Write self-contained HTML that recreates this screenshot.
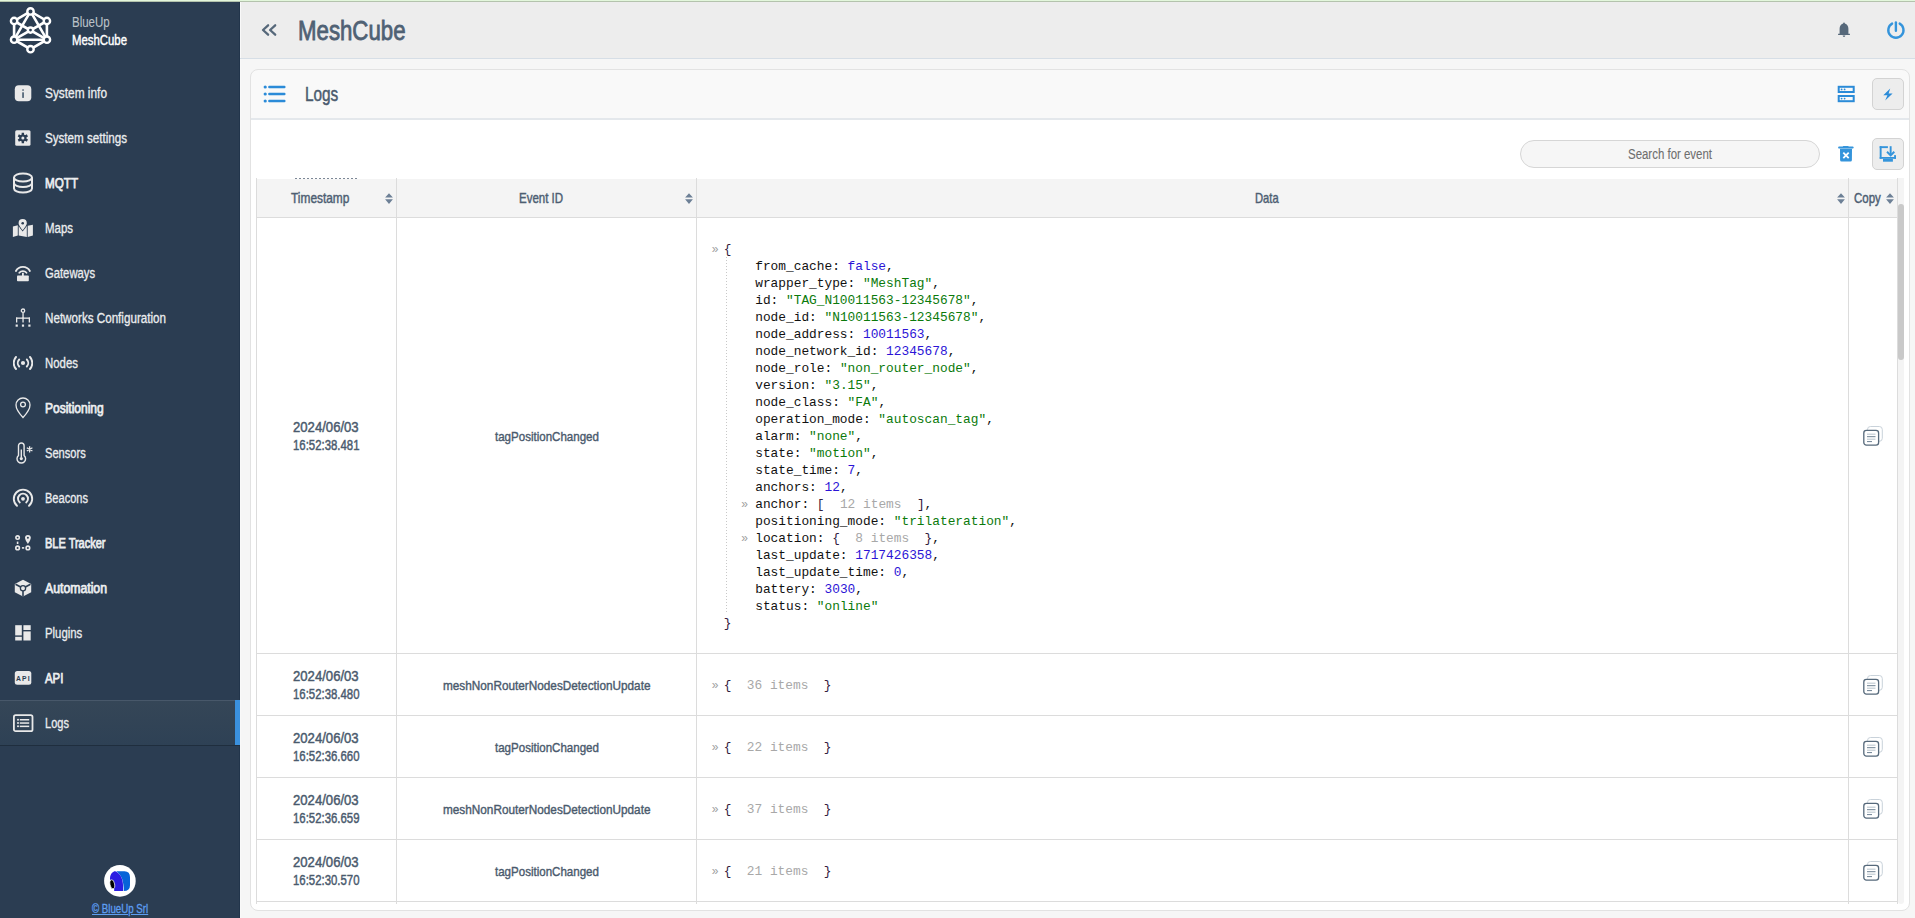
<!DOCTYPE html>
<html><head><meta charset="utf-8"><style>
html,body{margin:0;padding:0;}
body{width:1915px;height:918px;overflow:hidden;position:relative;background:#f5f5f5;font-family:"Liberation Sans",sans-serif;}
.t{position:absolute;white-space:pre;line-height:1;transform-origin:0 0;}
.mono{position:absolute;white-space:pre;font-family:"Liberation Mono",monospace;font-size:12.83px;line-height:17px;color:#111;}
.st{color:#0b7a0b;}
.nm{color:#2b14d6;}
.it{color:#a8a8a8;}
.br{color:#33203e;}
.arr{position:absolute;left:-12px;top:0.5px;font-family:"Liberation Sans",sans-serif;font-size:12px;color:#a0a0a0;}
.arr2{position:absolute;left:-14px;top:0.5px;font-family:"Liberation Sans",sans-serif;font-size:12px;color:#a0a0a0;}
</style></head><body>
<div style="position:absolute;left:0px;top:0px;width:1915px;height:1px;background:#e3f7dc"></div>
<div style="position:absolute;left:0px;top:1px;width:1915px;height:1px;background:#b4c3ad"></div>
<div style="position:absolute;left:0px;top:2px;width:240px;height:916px;background:#2b3d52"></div>
<div style="position:absolute;left:239px;top:2px;width:1px;height:916px;background:#22354b"></div>
<div style="position:absolute;left:240px;top:2px;width:1px;height:916px;background:#f9f9f9"></div>
<div style="position:absolute;left:241px;top:2px;width:1674px;height:56px;background:#ededed"></div>
<div style="position:absolute;left:240px;top:58px;width:1675px;height:1px;background:#d6dee6"></div>
<div style="position:absolute;left:241px;top:59px;width:1674px;height:859px;background:#f6f6f6"></div>
<div style="position:absolute;left:250px;top:69px;width:1660px;height:842px;box-sizing:border-box;border:1px solid #e2e2e2;border-radius:8px;background:linear-gradient(#f9f9f9 0 48px,#e4e8ec 48px 50px,#fff 50px)"></div>
<svg style="position:absolute;left:0;top:0" width="60" height="60" viewBox="0 0 60 60">
<g stroke="#fff" stroke-width="2.6" fill="none" stroke-linecap="round">
<path d="M30.5 11.4 L14.1 21 L14.1 39.7 L30.5 49.2 L46.9 39.7 L46.9 21 Z"/>
<path d="M30.5 11.4 L14.1 39.7 L46.9 39.7 Z"/>
<path d="M14.1 21 L46.9 39.7 M46.9 21 L14.1 39.7"/>
</g>
<g fill="#2b3d52" stroke="#fff" stroke-width="2.4">
<circle cx="30.5" cy="11.4" r="3.2"/><circle cx="14.1" cy="21" r="3.2"/><circle cx="46.9" cy="21" r="3.2"/>
<circle cx="14.1" cy="39.7" r="3.2"/><circle cx="46.9" cy="39.7" r="3.2"/><circle cx="30.5" cy="49.2" r="3.2"/>
<circle cx="30.5" cy="30.1" r="2.6"/>
</g></svg>
<div class="t" style="left:71.80px;top:15.25px;font-size:14px;font-weight:normal;color:#bcc2c8;transform:scaleX(0.8210);-webkit-text-stroke:0.1px #bcc2c8;">BlueUp</div>
<div class="t" style="left:71.60px;top:32.75px;font-size:14px;font-weight:normal;color:#ffffff;transform:scaleX(0.8124);-webkit-text-stroke:0.4px #ffffff;">MeshCube</div>
<div style="position:absolute;left:0px;top:700px;width:236px;height:1px;background:#48586a"></div>
<div style="position:absolute;left:0px;top:701px;width:236px;height:44px;background:linear-gradient(#354657,#2e4155)"></div>
<div style="position:absolute;left:0px;top:745px;width:240px;height:1px;background:#1f2e3e"></div>
<div style="position:absolute;left:235px;top:700px;width:5px;height:45px;background:#3a90dd"></div>
<div class="t" style="left:45.00px;top:86.15px;font-size:14px;font-weight:normal;color:#ebedef;transform:scaleX(0.8477);-webkit-text-stroke:0.3px #ebedef;">System info</div>
<div class="t" style="left:45.00px;top:131.15px;font-size:14px;font-weight:normal;color:#ebedef;transform:scaleX(0.8299);-webkit-text-stroke:0.3px #ebedef;">System settings</div>
<div class="t" style="left:45.00px;top:176.15px;font-size:14px;font-weight:normal;color:#ebedef;transform:scaleX(0.8321);-webkit-text-stroke:0.75px #ebedef;">MQTT</div>
<div class="t" style="left:45.00px;top:221.15px;font-size:14px;font-weight:normal;color:#ebedef;transform:scaleX(0.8180);-webkit-text-stroke:0.3px #ebedef;">Maps</div>
<div class="t" style="left:45.00px;top:266.15px;font-size:14px;font-weight:normal;color:#ebedef;transform:scaleX(0.8032);-webkit-text-stroke:0.3px #ebedef;">Gateways</div>
<div class="t" style="left:45.00px;top:311.15px;font-size:14px;font-weight:normal;color:#ebedef;transform:scaleX(0.8316);-webkit-text-stroke:0.3px #ebedef;">Networks Configuration</div>
<div class="t" style="left:45.00px;top:356.15px;font-size:14px;font-weight:normal;color:#ebedef;transform:scaleX(0.8154);-webkit-text-stroke:0.3px #ebedef;">Nodes</div>
<div class="t" style="left:45.00px;top:401.15px;font-size:14px;font-weight:normal;color:#ebedef;transform:scaleX(0.8571);-webkit-text-stroke:0.75px #ebedef;">Positioning</div>
<div class="t" style="left:45.00px;top:446.15px;font-size:14px;font-weight:normal;color:#ebedef;transform:scaleX(0.7924);-webkit-text-stroke:0.3px #ebedef;">Sensors</div>
<div class="t" style="left:45.00px;top:491.15px;font-size:14px;font-weight:normal;color:#ebedef;transform:scaleX(0.7893);-webkit-text-stroke:0.3px #ebedef;">Beacons</div>
<div class="t" style="left:45.00px;top:536.15px;font-size:14px;font-weight:normal;color:#ebedef;transform:scaleX(0.7854);-webkit-text-stroke:0.75px #ebedef;">BLE Tracker</div>
<div class="t" style="left:45.00px;top:581.15px;font-size:14px;font-weight:normal;color:#ebedef;transform:scaleX(0.8755);-webkit-text-stroke:0.75px #ebedef;">Automation</div>
<div class="t" style="left:45.00px;top:626.15px;font-size:14px;font-weight:normal;color:#ebedef;transform:scaleX(0.8123);-webkit-text-stroke:0.3px #ebedef;">Plugins</div>
<div class="t" style="left:45.00px;top:671.15px;font-size:14px;font-weight:normal;color:#ebedef;transform:scaleX(0.8152);-webkit-text-stroke:0.75px #ebedef;">API</div>
<div class="t" style="left:45.00px;top:716.15px;font-size:14px;font-weight:normal;color:#ebedef;transform:scaleX(0.7872);-webkit-text-stroke:0.3px #ebedef;">Logs</div>
<svg style="position:absolute;left:14px;top:85px" width="18" height="17" viewBox="0 0 18 17"><rect x="0.8" y="0.2" width="16.5" height="16" rx="4" fill="#e9e9e9"/><rect x="8.15" y="7.3" width="1.8" height="5.6" fill="#56687a"/><rect x="8.15" y="4.3" width="1.8" height="1.5" rx="0.6" fill="#56687a"/></svg>
<svg style="position:absolute;left:15px;top:130px" width="16" height="16" viewBox="0 0 16 16"><rect x="0.2" y="0.3" width="15.3" height="15.4" rx="1.5" fill="#e9e9e9"/><g fill="#2b3d52"><circle cx="7.85" cy="8" r="3.6"/><g stroke="#2b3d52" stroke-width="2.4"><path d="M7.85 2.8V13.2M3.3 5.4L12.4 10.6M3.3 10.6L12.4 5.4"/></g></g><circle cx="7.85" cy="8" r="1.5" fill="#e9e9e9"/></svg>
<svg style="position:absolute;left:12px;top:172px" width="22" height="22" viewBox="0 0 22 22"><g fill="none" stroke="#e9e9e9" stroke-width="2"><ellipse cx="11" cy="5.5" rx="9" ry="4"/><path d="M2 5.5V16.5C2 18.7 6 20.5 11 20.5S20 18.7 20 16.5V5.5"/><path d="M2 11C2 13.2 6 15 11 15S20 13.2 20 11"/></g></svg>
<svg style="position:absolute;left:8px;top:213px" width="32" height="30" viewBox="0 0 32 30"><g fill="#e9e9e9"><path d="M4.9 13.5L9.8 12.2V22.5L4.9 24.1Z"/><path d="M10.7 13.2L18.8 13.2V24.1L10.7 22.5Z"/><path d="M19.7 12.7L24.9 11.8V22.5L19.7 24.1Z"/></g><path d="M14.7 5.3A4.9 4.9 0 0 1 19.6 10.2C19.6 13 14.7 18.4 14.7 18.4S9.8 13 9.8 10.2A4.9 4.9 0 0 1 14.7 5.3Z" fill="#2b3d52"/><path d="M14.7 6.1A4.1 4.1 0 0 1 18.8 10.2C18.8 12.5 14.7 17.2 14.7 17.2S10.6 12.5 10.6 10.2A4.1 4.1 0 0 1 14.7 6.1Z" fill="#e9e9e9"/><circle cx="14.7" cy="10.2" r="1.3" fill="#2b3d52"/></svg>
<svg style="position:absolute;left:14px;top:264px" width="18" height="18" viewBox="0 0 18 18"><g fill="none" stroke="#e9e9e9" stroke-width="1.8" stroke-linecap="round"><path d="M1.9 7A8 8 0 0 1 15.9 7"/><path d="M5.3 8.8A4.6 4.6 0 0 1 12.5 8.8"/></g><rect x="8" y="8.8" width="1.8" height="3.5" fill="#e9e9e9"/><rect x="3" y="11.5" width="11.8" height="5.8" rx="0.8" fill="#e9e9e9"/></svg>
<svg style="position:absolute;left:14px;top:308px" width="18" height="20" viewBox="0 0 18 20"><g fill="none" stroke="#e9e9e9" stroke-width="1.3"><circle cx="9" cy="2.7" r="1.7"/></g><g fill="#e9e9e9"><rect x="8.4" y="4.5" width="1.3" height="6"/><rect x="2" y="9.5" width="14" height="1.3"/><rect x="2" y="9.5" width="1.3" height="5"/><rect x="8.4" y="9.5" width="1.3" height="5"/><rect x="14.7" y="9.5" width="1.3" height="5"/><rect x="1.6" y="16.5" width="2.2" height="2.2"/><rect x="7.9" y="16.5" width="2.2" height="2.2"/><rect x="14.3" y="16.5" width="2.2" height="2.2"/></g></svg>
<svg style="position:absolute;left:13px;top:356px" width="20" height="14" viewBox="0 0 20 14"><g fill="none" stroke="#e9e9e9" stroke-width="1.9" stroke-linecap="round"><path d="M3 1A9 9 0 0 0 3 13"/><path d="M17 1A9 9 0 0 1 17 13"/><path d="M6.2 3.5A5 5 0 0 0 6.2 10.5"/><path d="M13.8 3.5A5 5 0 0 1 13.8 10.5"/></g><circle cx="10" cy="7" r="2.1" fill="#e9e9e9"/></svg>
<svg style="position:absolute;left:15px;top:397px" width="16" height="22" viewBox="0 0 16 22"><g fill="none" stroke="#e9e9e9" stroke-width="1.3"><path d="M8 20.5C8 20.5 1 13 1 8A7 7 0 0 1 15 8C15 13 8 20.5 8 20.5Z"/><circle cx="8" cy="7.5" r="2.4"/></g></svg>
<svg style="position:absolute;left:15px;top:442px" width="19" height="22" viewBox="0 0 19 22"><g fill="none" stroke="#e9e9e9" stroke-width="1.4"><path d="M3.5 13.5V3.8A2.8 2.8 0 0 1 9.1 3.8V13.5A4.3 4.3 0 1 1 3.5 13.5Z"/></g><rect x="5.6" y="7.5" width="1.4" height="8" fill="#e9e9e9"/><circle cx="6.3" cy="16.6" r="1.6" fill="#e9e9e9"/><g stroke="#e9e9e9" stroke-width="1.3"><path d="M14.6 4.2V10.5M11.8 5.7L17.4 9M11.8 9L17.4 5.7"/></g></svg>
<svg style="position:absolute;left:12px;top:488px" width="22" height="20" viewBox="0 0 22 20"><g fill="none" stroke="#e9e9e9" stroke-width="1.9" stroke-linecap="round"><path d="M5 17.8A9.2 9.2 0 1 1 17 17.8"/><path d="M7.8 14.5A5 5 0 1 1 14.2 14.5"/></g><circle cx="11" cy="10.8" r="1.9" fill="#e9e9e9"/></svg>
<svg style="position:absolute;left:14px;top:534px" width="19" height="18" viewBox="0 0 19 18"><g fill="none" stroke="#e9e9e9" stroke-width="1.6"><circle cx="3.6" cy="3.6" r="1.7"/><circle cx="3.6" cy="13.9" r="1.8"/><circle cx="13.9" cy="13.9" r="1.8"/></g><g fill="#e9e9e9"><rect x="2.8" y="7.6" width="1.6" height="2.4"/><rect x="7.9" y="13.1" width="2.3" height="1.6"/><path d="M13.9 0.9A2.9 2.9 0 0 1 16.8 3.8C16.8 5.9 13.9 10 13.9 10S11 5.9 11 3.8A2.9 2.9 0 0 1 13.9 0.9Z"/></g><circle cx="13.9" cy="3.7" r="1" fill="#2b3d52"/></svg>
<svg style="position:absolute;left:14px;top:579px" width="18" height="18" viewBox="0 0 18 18"><path d="M9 0.7L17.2 5V13.2L9 17.5L0.8 13.2V5Z" fill="#e9e9e9"/><g stroke="#2b3d52" stroke-width="1.6" fill="none"><path d="M9 9.3V17.5M9 9.3L1.5 5.2M9 9.3L16.5 5.2"/></g><circle cx="9" cy="9.3" r="2.6" fill="#e9e9e9" stroke="#2b3d52" stroke-width="1.3"/></svg>
<svg style="position:absolute;left:15px;top:625px" width="16" height="16" viewBox="0 0 16 16"><g fill="#e9e9e9"><rect x="0.2" y="0.2" width="6.6" height="10.2"/><rect x="0.2" y="11.8" width="6.6" height="3.7"/><rect x="8.4" y="0.2" width="7.3" height="4.8"/><rect x="8.4" y="6.4" width="7.3" height="9.1"/></g></svg>
<svg style="position:absolute;left:14px;top:670px" width="18" height="16" viewBox="0 0 18 16"><rect x="0.8" y="1" width="16.5" height="13.8" rx="2.5" fill="#e9e9e9"/><text x="9.4" y="11.1" text-anchor="middle" font-family="Liberation Sans" font-weight="bold" font-size="6.8" fill="#2b3d52" letter-spacing="1.1">API</text></svg>
<svg style="position:absolute;left:12px;top:713px" width="22" height="20" viewBox="0 0 22 20"><rect x="1.9" y="2.2" width="18.6" height="16" rx="1.8" fill="none" stroke="#e9e9e9" stroke-width="1.8"/><g fill="#e9e9e9"><circle cx="6" cy="6.7" r="1"/><circle cx="6" cy="10" r="1"/><circle cx="6" cy="13.3" r="1"/><rect x="7.8" y="6" width="9.4" height="1.5"/><rect x="7.8" y="9.3" width="9.4" height="1.5"/><rect x="7.8" y="12.6" width="9.4" height="1.5"/></g></svg>
<svg style="position:absolute;left:102px;top:863px" width="36" height="36" viewBox="0 0 36 36"><circle cx="17.9" cy="17.9" r="15.8" fill="#fff"/><path d="M14.2 8.2H22.5Q28 8.2 28 14.2V22.2Q28 28 21.8 28H21.7C21.9 18.5 19.6 11.5 14.2 8.2Z" fill="#0663d8"/><path d="M8 15C8.5 10.5 11 8.3 13.3 8.3C18.5 10.8 21 16 21 22V28H12.2C12.3 23.5 11.5 18 8 16.5Z" fill="#2b1de2"/><ellipse cx="10.3" cy="21.3" rx="2.3" ry="4.6" fill="#000" stroke="#fff" stroke-width="0.7" transform="rotate(-10 10.3 21.3)"/></svg>
<div class="t" style="left:91.70px;top:903.24px;font-size:12px;font-weight:normal;color:#5d9ef2;transform:scaleX(0.8083);-webkit-text-stroke:0.3px #5d9ef2;text-decoration:underline;">© BlueUp Srl</div>
<svg style="position:absolute;left:259px;top:21px" width="20" height="18" viewBox="0 0 20 18"><g fill="none" stroke="#56687a" stroke-width="2.3" stroke-linecap="round" stroke-linejoin="round"><path d="M9.1 4.3L4 9L9.1 13.7"/><path d="M16.2 4.3L11.1 9L16.2 13.7"/></g></svg>
<div class="t" style="left:298.30px;top:17.74px;font-size:27px;font-weight:normal;color:#4f6174;transform:scaleX(0.8233);-webkit-text-stroke:0.8px #4f6174;">MeshCube</div>
<svg style="position:absolute;left:1836px;top:21px" width="16" height="18" viewBox="0 0 16 18"><path d="M8 1.5C8.6 1.5 8.9 1.9 8.9 2.5C11.2 3.2 12.4 5.2 12.4 7.8V12.8H13.9V13.9H2.1V12.8H3.6V7.8C3.6 5.2 4.8 3.2 7.1 2.5C7.1 1.9 7.4 1.5 8 1.5Z" fill="#56687a"/><path d="M6.7 14.6H9.3C9.3 15.4 8.8 16 8 16S6.7 15.4 6.7 14.6Z" fill="#56687a"/></svg>
<svg style="position:absolute;left:1885px;top:20px" width="22" height="21" viewBox="0 0 22 21"><g fill="none" stroke="#3494db" stroke-width="2.4" stroke-linecap="round"><path d="M7.1 3.6A7.6 7.6 0 1 0 14.7 3.6"/><path d="M10.9 2.5V10.7"/></g></svg>
<svg style="position:absolute;left:262px;top:84px" width="26" height="20" viewBox="0 0 26 20"><g fill="#2b8bd8"><circle cx="3.2" cy="3" r="1.6"/><circle cx="3.2" cy="10" r="1.6"/><circle cx="3.2" cy="17" r="1.6"/><rect x="6.2" y="1.8" width="17.3" height="2.4" rx="1"/><rect x="6.2" y="8.8" width="17.3" height="2.4" rx="1"/><rect x="6.2" y="15.8" width="17.3" height="2.4" rx="1"/></g></svg>
<div class="t" style="left:305.00px;top:84.07px;font-size:20px;font-weight:normal;color:#4a5b6e;transform:scaleX(0.7678);-webkit-text-stroke:0.5px #4a5b6e;">Logs</div>
<svg style="position:absolute;left:1836px;top:84px" width="20" height="20" viewBox="0 0 20 20"><g fill="none" stroke="#2b8bd8" stroke-width="2"><rect x="2.7" y="2.8" width="15" height="5.2"/><rect x="2.7" y="12" width="15" height="5.2"/></g><g fill="#2b8bd8"><circle cx="5.6" cy="5.4" r="0.9"/><circle cx="8.6" cy="5.4" r="0.9"/><circle cx="5.6" cy="14.6" r="0.9"/><circle cx="8.6" cy="14.6" r="0.9"/></g></svg>
<div style="position:absolute;left:1872px;top:78px;width:32px;height:32px;box-sizing:border-box;border:1px solid #d3d3d3;border-radius:5px;background:#ededed"></div>
<svg style="position:absolute;left:1882px;top:88px" width="12" height="13" viewBox="0 0 12 13"><path d="M8.2 0.5L1.3 7.2H5.4L3.2 12.5L10.6 5.4H6.6Z" fill="#2b8bd8"/></svg>
<div style="position:absolute;left:1520px;top:140px;width:300px;height:28px;box-sizing:border-box;border:1px solid #d6d6d6;border-radius:14px;background:#f6f6f6"></div>
<div class="t" style="left:1628.00px;top:147.35px;font-size:14px;font-weight:normal;color:#6e6e6e;transform:scaleX(0.8178);-webkit-text-stroke:0.1px #6e6e6e;">Search for event</div>
<svg style="position:absolute;left:1837px;top:145px" width="18" height="18" viewBox="0 0 18 18"><path d="M6.3 0.9H11.2L11.8 1.5H15.3A0.9 0.9 0 0 1 15.9 3.6H2A0.9 0.9 0 0 1 2.3 1.5H5.7Z" fill="#3494db"/><path d="M3 3.7H15L14.9 15A1.5 1.5 0 0 1 13.4 16.5H4.6A1.5 1.5 0 0 1 3.1 15Z" fill="#3494db"/><path d="M6.3 7.7L11.7 13.2M11.7 7.7L6.3 13.2" stroke="#fff" stroke-width="1.8"/></svg>
<div style="position:absolute;left:1872px;top:138px;width:32px;height:32px;box-sizing:border-box;border:1px solid #d3d3d3;border-radius:5px;background:#ededed"></div>
<svg style="position:absolute;left:1876px;top:142px" width="24" height="24" viewBox="0 0 24 24"><g fill="#3494db"><rect x="3.7" y="4.2" width="1.9" height="12.6"/><rect x="3.7" y="4.2" width="8.2" height="1.9"/><rect x="3.7" y="15" width="16.3" height="1.8"/><rect x="18.1" y="12.9" width="1.9" height="3.9" rx="0.6"/><rect x="13.7" y="4.2" width="1.9" height="8.5"/><rect x="7" y="16.8" width="9.9" height="2.9"/></g><path d="M11 9.8L14.65 13.4L18.3 9.8" fill="none" stroke="#3494db" stroke-width="1.9"/></svg>
<div style="position:absolute;left:256px;top:179px;width:1642px;height:39px;background:#f4f4f4"></div>
<div style="position:absolute;left:295px;top:178px;width:64px;height:1px;background:repeating-linear-gradient(90deg,#44546a 0 2px,transparent 2px 4px);opacity:.7"></div>
<div style="position:absolute;left:1898px;top:178px;width:6px;height:726px;background:#f4f4f4;border-radius:0 0 3px 3px"></div>
<div style="position:absolute;left:1898px;top:204px;width:6px;height:156px;background:#c9c9c9;border-radius:3px"></div>
<div style="position:absolute;left:256px;top:178px;width:1px;height:726px;background:#dcdcdc"></div>
<div style="position:absolute;left:396px;top:178px;width:1px;height:726px;background:#dcdcdc"></div>
<div style="position:absolute;left:696px;top:178px;width:1px;height:726px;background:#dcdcdc"></div>
<div style="position:absolute;left:1848px;top:178px;width:1px;height:726px;background:#dcdcdc"></div>
<div style="position:absolute;left:1897px;top:178px;width:1px;height:726px;background:#dcdcdc"></div>
<div style="position:absolute;left:256px;top:217px;width:1642px;height:1px;background:#dcdcdc"></div>
<div style="position:absolute;left:256px;top:653px;width:1642px;height:1px;background:#dcdcdc"></div>
<div style="position:absolute;left:256px;top:715px;width:1642px;height:1px;background:#dcdcdc"></div>
<div style="position:absolute;left:256px;top:777px;width:1642px;height:1px;background:#dcdcdc"></div>
<div style="position:absolute;left:256px;top:839px;width:1642px;height:1px;background:#dcdcdc"></div>
<div style="position:absolute;left:256px;top:901px;width:1642px;height:1px;background:#dcdcdc"></div>
<div class="t" style="left:291.40px;top:190.73px;font-size:14.5px;font-weight:normal;color:#4d5e72;transform:scaleX(0.8206);-webkit-text-stroke:0.45px #4d5e72;">Timestamp</div>
<div class="t" style="left:518.75px;top:190.73px;font-size:14.5px;font-weight:normal;color:#4d5e72;transform:scaleX(0.7930);-webkit-text-stroke:0.45px #4d5e72;">Event ID</div>
<div class="t" style="left:1255.30px;top:190.73px;font-size:14.5px;font-weight:normal;color:#4d5e72;transform:scaleX(0.7705);-webkit-text-stroke:0.45px #4d5e72;">Data</div>
<div class="t" style="left:1853.70px;top:190.63px;font-size:14.5px;font-weight:normal;color:#4d5e72;transform:scaleX(0.7917);-webkit-text-stroke:0.45px #4d5e72;">Copy</div>
<svg style="position:absolute;left:385px;top:193px" width="8" height="11" viewBox="0 0 8 11"><path d="M4 0.3L7.9 4.6H0.1Z M4 10.9L7.9 6.3H0.1Z" fill="#6d8096"/></svg>
<svg style="position:absolute;left:685px;top:193px" width="8" height="11" viewBox="0 0 8 11"><path d="M4 0.3L7.9 4.6H0.1Z M4 10.9L7.9 6.3H0.1Z" fill="#6d8096"/></svg>
<svg style="position:absolute;left:1837px;top:193px" width="8" height="11" viewBox="0 0 8 11"><path d="M4 0.3L7.9 4.6H0.1Z M4 10.9L7.9 6.3H0.1Z" fill="#6d8096"/></svg>
<svg style="position:absolute;left:1886px;top:193px" width="8" height="11" viewBox="0 0 8 11"><path d="M4 0.3L7.9 4.6H0.1Z M4 10.9L7.9 6.3H0.1Z" fill="#6d8096"/></svg>
<div class="t" style="left:293.45px;top:419.76px;font-size:14.1px;font-weight:normal;color:#4a5a6d;transform:scaleX(0.9310);-webkit-text-stroke:0.45px #4a5a6d;">2024/06/03</div>
<div class="t" style="left:293.05px;top:437.56px;font-size:14.1px;font-weight:normal;color:#4a5a6d;transform:scaleX(0.8077);-webkit-text-stroke:0.45px #4a5a6d;">16:52:38.481</div>
<div class="t" style="left:495.00px;top:430.13px;font-size:13.2px;font-weight:normal;color:#4a5a6d;transform:scaleX(0.8748);-webkit-text-stroke:0.4px #4a5a6d;">tagPositionChanged</div>
<svg style="position:absolute;left:1862px;top:424.5px" width="22" height="22" viewBox="0 0 22 22"><rect x="5.5" y="1.5" width="14.8" height="14.8" rx="3" fill="#fff" stroke="#c9d2da" stroke-width="1"/><rect x="1.8" y="5.3" width="14.8" height="14.8" rx="2.6" fill="#fff" stroke="#56697b" stroke-width="1.3"/><g fill="#c2ccd4"><rect x="5" y="8.6" width="8.5" height="1.2"/><rect x="5" y="13.6" width="8.5" height="1.2"/></g><g fill="#7a8c9c"><rect x="5" y="11.1" width="8.5" height="1.1"/><rect x="5" y="16" width="5" height="1.1"/></g></svg>
<div class="t" style="left:293.45px;top:668.76px;font-size:14.1px;font-weight:normal;color:#4a5a6d;transform:scaleX(0.9310);-webkit-text-stroke:0.45px #4a5a6d;">2024/06/03</div>
<div class="t" style="left:293.05px;top:686.56px;font-size:14.1px;font-weight:normal;color:#4a5a6d;transform:scaleX(0.8077);-webkit-text-stroke:0.45px #4a5a6d;">16:52:38.480</div>
<div class="t" style="left:443.15px;top:679.13px;font-size:13.2px;font-weight:normal;color:#4a5a6d;transform:scaleX(0.8929);-webkit-text-stroke:0.4px #4a5a6d;">meshNonRouterNodesDetectionUpdate</div>
<svg style="position:absolute;left:1862px;top:673.5px" width="22" height="22" viewBox="0 0 22 22"><rect x="5.5" y="1.5" width="14.8" height="14.8" rx="3" fill="#fff" stroke="#c9d2da" stroke-width="1"/><rect x="1.8" y="5.3" width="14.8" height="14.8" rx="2.6" fill="#fff" stroke="#56697b" stroke-width="1.3"/><g fill="#c2ccd4"><rect x="5" y="8.6" width="8.5" height="1.2"/><rect x="5" y="13.6" width="8.5" height="1.2"/></g><g fill="#7a8c9c"><rect x="5" y="11.1" width="8.5" height="1.1"/><rect x="5" y="16" width="5" height="1.1"/></g></svg>
<div class="mono" style="left:723.7px;top:676.5px"><span class="arr">&raquo;</span><span class="br">{</span>  <span class="it">36 items</span>  <span class="br">}</span></div>
<div class="t" style="left:293.45px;top:730.76px;font-size:14.1px;font-weight:normal;color:#4a5a6d;transform:scaleX(0.9310);-webkit-text-stroke:0.45px #4a5a6d;">2024/06/03</div>
<div class="t" style="left:293.05px;top:748.56px;font-size:14.1px;font-weight:normal;color:#4a5a6d;transform:scaleX(0.8077);-webkit-text-stroke:0.45px #4a5a6d;">16:52:36.660</div>
<div class="t" style="left:495.00px;top:741.13px;font-size:13.2px;font-weight:normal;color:#4a5a6d;transform:scaleX(0.8748);-webkit-text-stroke:0.4px #4a5a6d;">tagPositionChanged</div>
<svg style="position:absolute;left:1862px;top:735.5px" width="22" height="22" viewBox="0 0 22 22"><rect x="5.5" y="1.5" width="14.8" height="14.8" rx="3" fill="#fff" stroke="#c9d2da" stroke-width="1"/><rect x="1.8" y="5.3" width="14.8" height="14.8" rx="2.6" fill="#fff" stroke="#56697b" stroke-width="1.3"/><g fill="#c2ccd4"><rect x="5" y="8.6" width="8.5" height="1.2"/><rect x="5" y="13.6" width="8.5" height="1.2"/></g><g fill="#7a8c9c"><rect x="5" y="11.1" width="8.5" height="1.1"/><rect x="5" y="16" width="5" height="1.1"/></g></svg>
<div class="mono" style="left:723.7px;top:738.5px"><span class="arr">&raquo;</span><span class="br">{</span>  <span class="it">22 items</span>  <span class="br">}</span></div>
<div class="t" style="left:293.45px;top:792.76px;font-size:14.1px;font-weight:normal;color:#4a5a6d;transform:scaleX(0.9310);-webkit-text-stroke:0.45px #4a5a6d;">2024/06/03</div>
<div class="t" style="left:293.05px;top:810.56px;font-size:14.1px;font-weight:normal;color:#4a5a6d;transform:scaleX(0.8077);-webkit-text-stroke:0.45px #4a5a6d;">16:52:36.659</div>
<div class="t" style="left:443.15px;top:803.13px;font-size:13.2px;font-weight:normal;color:#4a5a6d;transform:scaleX(0.8929);-webkit-text-stroke:0.4px #4a5a6d;">meshNonRouterNodesDetectionUpdate</div>
<svg style="position:absolute;left:1862px;top:797.5px" width="22" height="22" viewBox="0 0 22 22"><rect x="5.5" y="1.5" width="14.8" height="14.8" rx="3" fill="#fff" stroke="#c9d2da" stroke-width="1"/><rect x="1.8" y="5.3" width="14.8" height="14.8" rx="2.6" fill="#fff" stroke="#56697b" stroke-width="1.3"/><g fill="#c2ccd4"><rect x="5" y="8.6" width="8.5" height="1.2"/><rect x="5" y="13.6" width="8.5" height="1.2"/></g><g fill="#7a8c9c"><rect x="5" y="11.1" width="8.5" height="1.1"/><rect x="5" y="16" width="5" height="1.1"/></g></svg>
<div class="mono" style="left:723.7px;top:800.5px"><span class="arr">&raquo;</span><span class="br">{</span>  <span class="it">37 items</span>  <span class="br">}</span></div>
<div class="t" style="left:293.45px;top:854.76px;font-size:14.1px;font-weight:normal;color:#4a5a6d;transform:scaleX(0.9310);-webkit-text-stroke:0.45px #4a5a6d;">2024/06/03</div>
<div class="t" style="left:293.05px;top:872.56px;font-size:14.1px;font-weight:normal;color:#4a5a6d;transform:scaleX(0.8077);-webkit-text-stroke:0.45px #4a5a6d;">16:52:30.570</div>
<div class="t" style="left:495.00px;top:865.13px;font-size:13.2px;font-weight:normal;color:#4a5a6d;transform:scaleX(0.8748);-webkit-text-stroke:0.4px #4a5a6d;">tagPositionChanged</div>
<svg style="position:absolute;left:1862px;top:859.5px" width="22" height="22" viewBox="0 0 22 22"><rect x="5.5" y="1.5" width="14.8" height="14.8" rx="3" fill="#fff" stroke="#c9d2da" stroke-width="1"/><rect x="1.8" y="5.3" width="14.8" height="14.8" rx="2.6" fill="#fff" stroke="#56697b" stroke-width="1.3"/><g fill="#c2ccd4"><rect x="5" y="8.6" width="8.5" height="1.2"/><rect x="5" y="13.6" width="8.5" height="1.2"/></g><g fill="#7a8c9c"><rect x="5" y="11.1" width="8.5" height="1.1"/><rect x="5" y="16" width="5" height="1.1"/></g></svg>
<div class="mono" style="left:723.7px;top:862.5px"><span class="arr">&raquo;</span><span class="br">{</span>  <span class="it">21 items</span>  <span class="br">}</span></div>
<div class="mono" style="left:723.7px;top:240.5px"><span class="arr">&raquo;</span><span class="br">{</span></div>
<div class="mono" style="left:755.2px;top:257.5px">from_cache: <span class="nm">false</span>,</div>
<div class="mono" style="left:755.2px;top:274.5px">wrapper_type: <span class="st">"MeshTag"</span>,</div>
<div class="mono" style="left:755.2px;top:291.5px">id: <span class="st">"TAG_N10011563-12345678"</span>,</div>
<div class="mono" style="left:755.2px;top:308.5px">node_id: <span class="st">"N10011563-12345678"</span>,</div>
<div class="mono" style="left:755.2px;top:325.5px">node_address: <span class="nm">10011563</span>,</div>
<div class="mono" style="left:755.2px;top:342.5px">node_network_id: <span class="nm">12345678</span>,</div>
<div class="mono" style="left:755.2px;top:359.5px">node_role: <span class="st">"non_router_node"</span>,</div>
<div class="mono" style="left:755.2px;top:376.5px">version: <span class="st">"3.15"</span>,</div>
<div class="mono" style="left:755.2px;top:393.5px">node_class: <span class="st">"FA"</span>,</div>
<div class="mono" style="left:755.2px;top:410.5px">operation_mode: <span class="st">"autoscan_tag"</span>,</div>
<div class="mono" style="left:755.2px;top:427.5px">alarm: <span class="st">"none"</span>,</div>
<div class="mono" style="left:755.2px;top:444.5px">state: <span class="st">"motion"</span>,</div>
<div class="mono" style="left:755.2px;top:461.5px">state_time: <span class="nm">7</span>,</div>
<div class="mono" style="left:755.2px;top:478.5px">anchors: <span class="nm">12</span>,</div>
<div class="mono" style="left:755.2px;top:495.5px">anchor: <span class="br">[</span>  <span class="it">12 items</span>  <span class="br">]</span>,</div>
<div class="mono" style="left:755.2px;top:495.5px"><span class="arr2">&raquo;</span></div>
<div class="mono" style="left:755.2px;top:512.5px">positioning_mode: <span class="st">"trilateration"</span>,</div>
<div class="mono" style="left:755.2px;top:529.5px">location: <span class="br">{</span>  <span class="it">8 items</span>  <span class="br">}</span>,</div>
<div class="mono" style="left:755.2px;top:529.5px"><span class="arr2">&raquo;</span></div>
<div class="mono" style="left:755.2px;top:546.5px">last_update: <span class="nm">1717426358</span>,</div>
<div class="mono" style="left:755.2px;top:563.5px">last_update_time: <span class="nm">0</span>,</div>
<div class="mono" style="left:755.2px;top:580.5px">battery: <span class="nm">3030</span>,</div>
<div class="mono" style="left:755.2px;top:597.5px">status: <span class="st">"online"</span></div>
<div class="mono" style="left:723.7px;top:614.5px"><span class="br">}</span></div>
<div style="position:absolute;left:726px;top:257px;width:1px;height:357px;background:repeating-linear-gradient(#c8c8c8 0 1px,transparent 1px 3px)"></div>
</body></html>
